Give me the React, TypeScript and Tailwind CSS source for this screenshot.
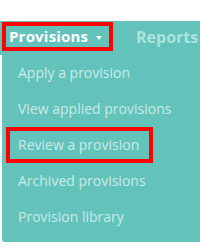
import React from 'react';

const items = [
  'Apply a provision',
  'View applied provisions',
  'Review a provision',
  'Archived provisions',
  'Provision library',
];

export default function App() {
  return (
    <div className="w-[200px] h-[250px] bg-white overflow-hidden" style={{ fontFamily: '"Open Sans", sans-serif' }}>
      <div className="h-[21px]" />
      <nav className="flex items-start h-[34px] bg-[#63c2ba] pl-[2px] pt-[1px] whitespace-nowrap">
        <div className="flex items-center w-[111px] h-[29px] border-4 border-[#ff0000] pl-[3px]">
          <span className="text-[15px] font-bold text-white leading-none tracking-[0.2px]">Provisions</span>
          <span className="ml-[8px] mt-[2px] w-0 h-0 border-l-[3px] border-r-[3px] border-t-[4px] border-l-transparent border-r-transparent border-t-white" />
        </div>
        <div className="flex items-center h-[29px] ml-[23px] text-[16px] font-bold text-[#aee3dd] leading-none">
          Reports
        </div>
      </nav>
      <div className="ml-[2px] bg-[#63c2ba] rounded-bl-[3px] pb-[7px] pl-[4px]">
        {items.map((item) => (
          <div
            key={item}
            className={
              item === 'Review a provision'
                ? 'flex items-center h-[36px] w-[147px] border-4 border-[#ff0000] pl-[8px] pb-[2px] text-[14px] text-[#c9ece8] whitespace-nowrap'
                : 'flex items-center h-[36px] border-4 border-transparent pl-[8px] pb-[2px] text-[14px] text-[#c9ece8] whitespace-nowrap'
            }
          >
            {item}
          </div>
        ))}
      </div>
    </div>
  );
}
